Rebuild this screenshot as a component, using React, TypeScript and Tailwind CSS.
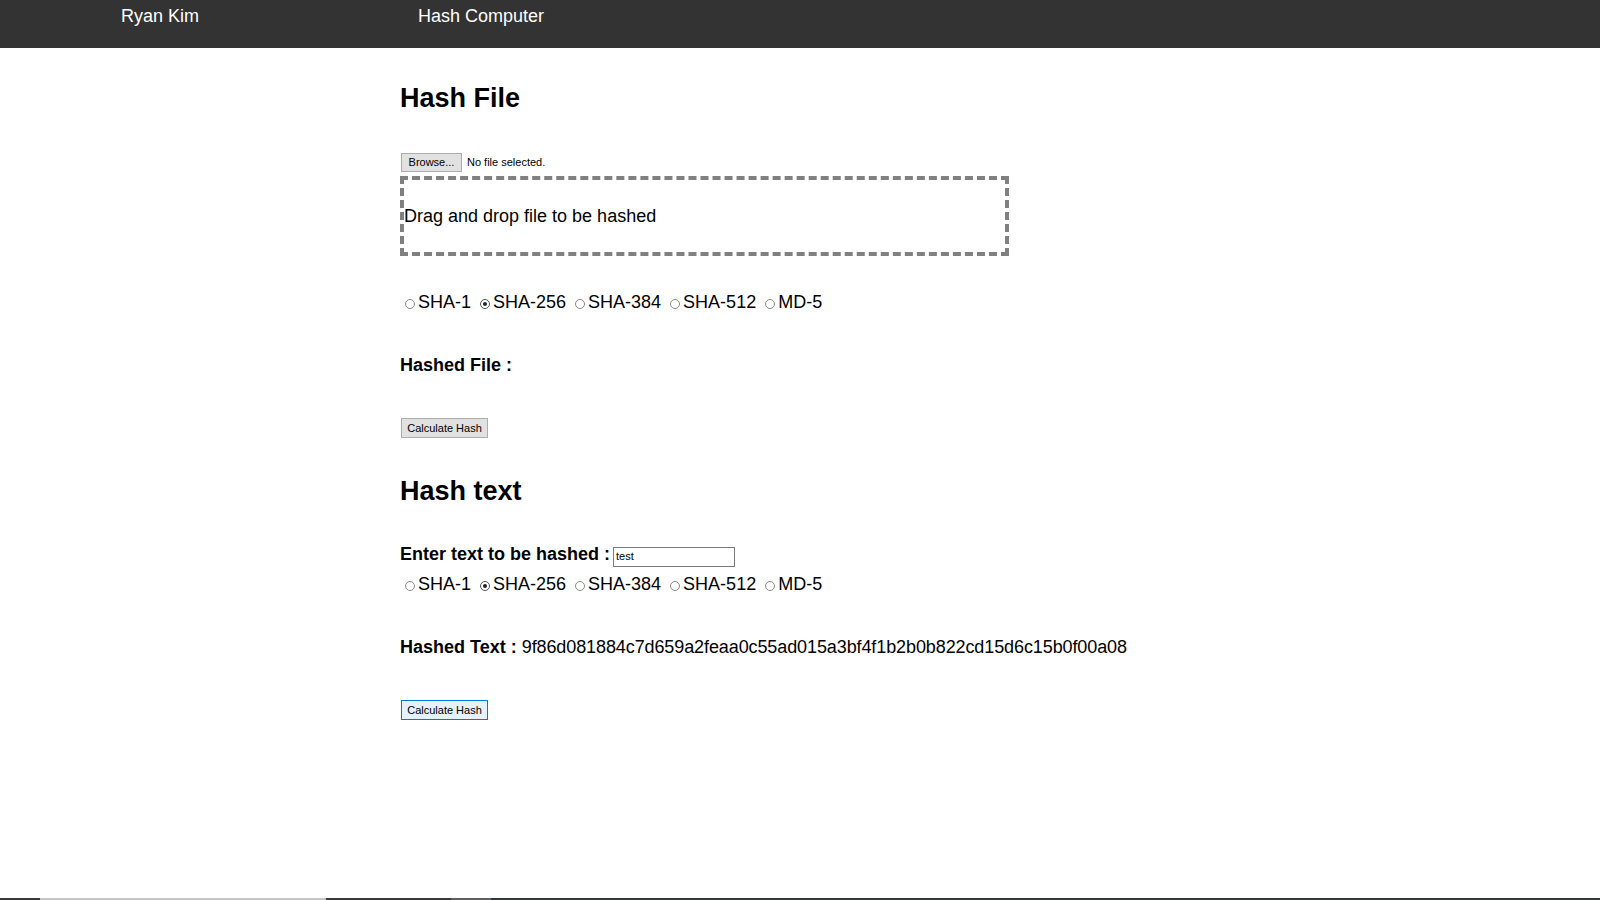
import { useState } from "react"

const ALGOS = ["SHA-1", "SHA-256", "SHA-384", "SHA-512", "MD-5"]
const HASH = "9f86d081884c7d659a2feaa0c55ad015a3bf4f1b2b0b822cd15d6c15b0f00a08"

function Radios({ name, value, onChange }: { name: string; value: string; onChange: (v: string) => void }) {
  return (
    <div className="flex items-center gap-[9px] pl-[5px] text-[18px] leading-[21px]">
      {ALGOS.map(a => (
        <label key={a} className="flex items-center cursor-default" onClick={() => onChange(a)}>
          <span
            data-name={name}
            className={`mr-[3px] mt-[3px] flex h-[10px] w-[10px] items-center justify-center rounded-full border bg-white ${
              a === value ? "border-[#555]" : "border-[#8a8a8a]"
            }`}
          >
            {a === value && <span className="h-[4px] w-[4px] rounded-full bg-[#222]" />}
          </span>
          {a}
        </label>
      ))}
    </div>
  )
}

export default function App() {
  const [fileAlgo, setFileAlgo] = useState("SHA-256")
  const [textAlgo, setTextAlgo] = useState("SHA-256")
  const [text, setText] = useState("test")

  return (
    <div className="flex h-screen flex-col bg-white font-['Liberation_Sans',Arial,sans-serif] text-black">
      {/* top bar */}
      <div className="flex h-[48px] shrink-0 bg-[#333333] pl-[121px] pt-[6px] text-[18px] leading-[21px] text-white">
        <span className="w-[297px]">Ryan Kim</span>
        <span>Hash Computer</span>
      </div>

      <div className="flex-1">
        <div className="mx-auto w-[800px]">
          <h2 className="mt-[34px] text-[27px] font-bold leading-[32px]">Hash File</h2>

          <div className="mt-[38px] flex h-[20px] items-center gap-[5px] text-[11px]">
            <button className="ml-[1px] h-[19px] w-[61px] border border-[#adadad] bg-[#e1e1e1] leading-none">Browse...</button>
            <span>No file selected.</span>
          </div>

          <div className="mt-[4px] flex h-[80px] w-[609px] items-center border-4 border-dashed border-[#808080] pt-[1px] text-[18px] leading-[21px]">
            Drag and drop file to be hashed
          </div>

          <div className="mt-[36px]">
            <Radios name="file" value={fileAlgo} onChange={setFileAlgo} />
          </div>

          <div className="mt-[42px] text-[18px] font-bold leading-[21px]">Hashed File :</div>

          <button className="mt-[42px] ml-[1px] block h-[20px] w-[87px] border border-[#adadad] bg-[#e1e1e1] text-[11px] leading-none">
            Calculate Hash
          </button>

          <h2 className="mt-[37px] text-[27px] font-bold leading-[32px]">Hash text</h2>

          <div className="mt-[37px] flex h-[21px] items-baseline gap-[3px] text-[18px] leading-[21px]">
            <span className="font-bold">Enter text to be hashed :</span>
            <input
              value={text}
              onChange={e => setText(e.target.value)}
              className="h-[20px] w-[122px] border border-[#7a7a7a] px-[2px] text-[11px] outline-none"
            />
          </div>

          <div className="mt-[9px]">
            <Radios name="text" value={textAlgo} onChange={setTextAlgo} />
          </div>

          <div className="mt-[42px] text-[18px] leading-[21px]">
            <span className="font-bold">Hashed Text :</span> <span className="tracking-[-0.1px]">{HASH}</span>
          </div>

          <button className="mt-[42px] ml-[1px] block h-[20px] w-[87px] border border-[#0078d7] bg-[#e5f1fb] text-[11px] leading-none">
            Calculate Hash
          </button>
        </div>
      </div>

      {/* bottom strip */}
      <div className="flex h-[2px] shrink-0">
        <div className="w-[40px] bg-[#3a3a3a]" />
        <div className="w-[286px] bg-[#c4c4c4]" />
        <div className="w-[125px] bg-[#3a3a3a]" />
        <div className="w-[40px] bg-[#5e5e5e]" />
        <div className="flex-1 bg-[#35383a]" />
      </div>
    </div>
  )
}
